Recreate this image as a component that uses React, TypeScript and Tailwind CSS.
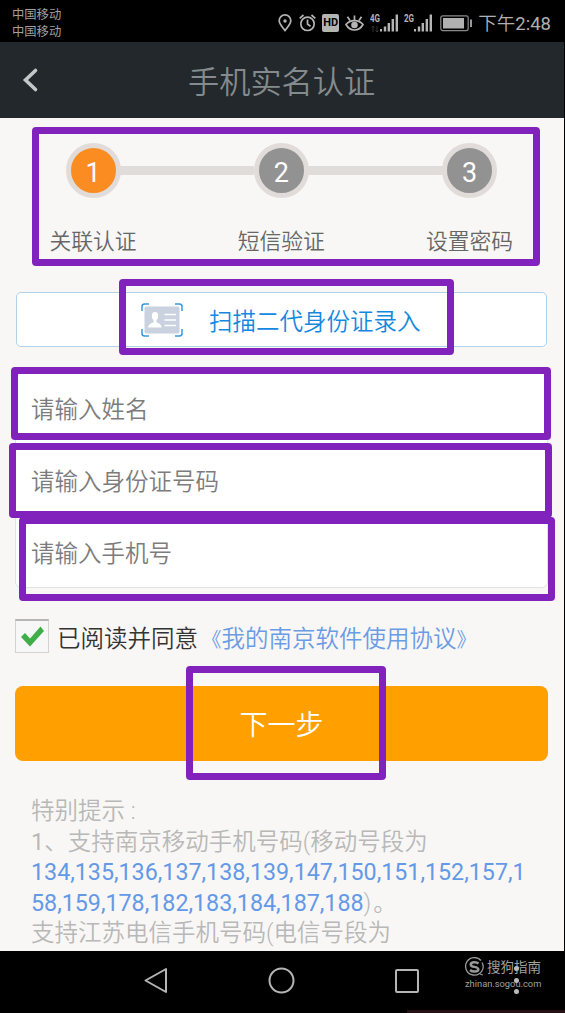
import React from "react";

const NOTE_NUMBERS_A = "134,135,136,137,138,139,147,150,151,152,157,1";
const NOTE_NUMBERS_B = "58,159,178,182,183,184,187,188";

function Frame({ className }: { className: string }) {
  return (
    <div
      className={`pointer-events-none absolute rounded-[4px] border-[7px] border-[#8022bb] ${className}`}
    />
  );
}

function Signal({ label, data }: { label: string; data?: boolean }) {
  return (
    <svg width="29" height="20" viewBox="0 0 29 20" fill="#b4b4b4">
      <text x="0" y="9" fontSize="10" fontWeight="700" textLength="10" lengthAdjust="spacingAndGlyphs">
        {label}
      </text>
      {data && (
        <path d="M3 13v6M1.500 14.500L3 13l1.500 1.500M7 13v6M5.500 17.500L7 19l1.500-1.500" fill="none" stroke="#333" strokeWidth="1" />
      )}
      <rect x="10" y="16" width="2" height="2.500" />
      <rect x="13.800" y="13.500" width="2.400" height="5" />
      <rect x="17.600" y="10" width="2.400" height="8.500" />
      <rect x="21.600" y="6" width="2.400" height="12.500" />
      <rect x="25.600" y="1.500" width="2.400" height="17" />
    </svg>
  );
}

function StatusBar() {
  return (
    <div className="flex h-[42px] items-start justify-between bg-black pl-3 pr-[13px] text-[#b0b0b0]">
      <div className="pt-[7px] text-[12.3px] leading-[17px] text-[#a0a0a0]">
        <div>中国移动</div>
        <div>中国移动</div>
      </div>
      <div className="flex h-[42px] items-center pt-[4px]">
        <svg width="14" height="18" viewBox="0 0 14 18" fill="none" stroke="#b4b4b4" strokeWidth="1.700">
          <path d="M7 16.500C4.500 13 1.200 10 1.200 6.700a5.800 5.800 0 0 1 11.600 0C12.800 10 9.500 13 7 16.500Z" />
          <circle cx="7" cy="7" r="1.700" fill="#b4b4b4" stroke="none" />
        </svg>
        <svg className="ml-[7px]" width="17" height="18" viewBox="0 0 17 18" fill="none" stroke="#b4b4b4" strokeWidth="1.700">
          <circle cx="8.500" cy="9.800" r="6.700" />
          <path d="M8.500 5.500v4.500l3 2.400M.7 4.300L4.500 1M16.300 4.300L12.500 1" />
        </svg>
        <div className="ml-[6px] flex h-[18px] w-[17px] items-center justify-center rounded-[2px] bg-[#b4b4b4] font-[Roboto] text-[11px] font-bold text-black">
          HD
        </div>
        <svg className="ml-[6px]" width="19" height="18" viewBox="0 0 19 18" fill="none" stroke="#b4b4b4" strokeWidth="1.700">
          <path d="M1 10.500C5 5.300 14 5.300 18 10.500C14 17.800 5 17.800 1 10.500Z" />
          <circle cx="9.500" cy="11" r="3.300" fill="#b4b4b4" stroke="none" />
          <path d="M9.500 6V1.500M5 6.500L2.500 2.800M14 6.500L16.500 2.800" />
        </svg>
        <div className="ml-[6px] flex">
          <Signal label="4G" data />
        </div>
        <div className="ml-[5px] flex">
          <Signal label="2G" />
        </div>
        <svg className="ml-[7px]" width="33" height="17" viewBox="0 0 33 17">
          <rect x=".8" y=".8" width="27.400" height="14.800" rx="2" fill="none" stroke="#8a8a8a" strokeWidth="1.200" />
          <rect x="3" y="3" width="21" height="10.500" fill="#b0b0b0" />
          <rect x="30" y="4.500" width="2" height="7.500" fill="#999" />
        </svg>
        <div className="ml-[5px] whitespace-nowrap pt-px text-[18.5px] font-[350] leading-5">
          下午<span className="font-normal">2:48</span>
        </div>
      </div>
    </div>
  );
}

function Header() {
  return (
    <div className="flex h-[76px] items-center bg-[#22282b]">
      <svg className="ml-[22px]" width="18" height="26" viewBox="0 0 18 26" fill="none" stroke="#c3c8c9" strokeWidth="3.600" strokeLinecap="round">
        <path d="M13.500 3.500L3.500 13l10 9.500" />
      </svg>
      <h1 className="ml-[148px] pt-[5px] text-[31.2px] font-[350] leading-10 text-[#858a8c]">手机实名认证</h1>
    </div>
  );
}

function Step({ n, label, active }: { n: number; label: string; active?: boolean }) {
  return (
    <div className="flex w-[88px] flex-col items-center">
      <div
        className={`flex size-[55px] items-center justify-center rounded-full border-[5px] border-[#e1dcd9] pt-[5px] text-[27px] leading-none text-white ${
          active ? "bg-[#fa8c21]" : "bg-[#929292]"
        }`}
      >
        {n}
      </div>
      <div className="mt-[32px] whitespace-nowrap text-[21.8px] font-[350] leading-6 text-[#666]">{label}</div>
    </div>
  );
}

function Connector() {
  return <div className="-mx-[17px] mt-[23px] h-[9px] flex-1 bg-[#e0dcd9]" />;
}

function ScanIcon() {
  return (
    <svg width="42" height="34" viewBox="0 0 42 34" fill="none">
      <rect x="3.500" y="3.500" width="35" height="27" rx="2" fill="#c9d2de" />
      <path d="M1 8V3.500Q1 1 3.500 1H8M34 1h4.500Q41 1 41 3.500V8M1 26v4.500Q1 33 3.500 33H8M34 33h4.500Q41 33 41 30.500V26" stroke="#3b96dc" strokeWidth="1.500" />
      <path d="M7 24.500q0-3 4-4.500l1.500-.8v-2q-2-2-1.700-5Q11.200 9 14 9t3.200 3.200q.3 3-1.700 5v2L17 20q3.500 1.500 3.500 4.500Z" fill="#fff" />
      <path d="M23.500 11.500H35M23.500 17H35M23.500 22.500H35" stroke="#fff" strokeWidth="1.700" />
    </svg>
  );
}

function Content() {
  return (
    <main className="h-[833px] overflow-hidden bg-[#f8f7f5]">
      <div className="flex items-start pl-[49px] pr-[50.5px] pt-[25px]">
        <Step n={1} label="关联认证" active />
        <Connector />
        <Step n={2} label="短信验证" />
        <Connector />
        <Step n={3} label="设置密码" />
      </div>

      <button className="ml-4 mt-[38px] flex h-[55px] w-[531px] items-center rounded-[5px] border border-[#b0d3e9] bg-white pl-[124px] text-[23.5px] font-[350] leading-8 text-[#1488df]">
        <ScanIcon />
        <span className="ml-[26px] pt-[4px]">扫描二代身份证录入</span>
      </button>

      <div className="ml-[15px] mt-[26px] w-[533px] divide-y divide-[#e2e2e2] rounded-[6px] border border-[#e2e2e2] bg-white text-[23.5px] font-[350] leading-8 text-[#7c7c7c]">
        <div className="flex h-[72px] items-center pl-[15px]">请输入姓名</div>
        <div className="flex h-[72px] items-center pl-[15px]">请输入身份证号码</div>
        <div className="flex h-[69px] items-center pl-[15px] pt-[3px]">请输入手机号</div>
      </div>

      <div className="ml-[15px] mt-[31px] flex items-center">
        <div className="flex size-[34px] items-center justify-center border border-t-2 border-[#d2d2d2] border-t-[#b5b5b5] bg-[#f7f7f7]">
          <svg width="25" height="24" viewBox="0 0 25 24" fill="#3fae49">
            <path d="M1 12l4-4 5 5.500L20.500 1.500l3.500 4.500L10 21.500Z" />
          </svg>
        </div>
        <div className="ml-[8px] flex h-[26px] whitespace-nowrap text-[23.5px] font-[350] leading-8 text-[#333]">
          已阅读并同意
          <span className="text-[#6b9be4]">
            <span className="ml-[3.5px] text-[20px]">《</span>我的南京软件使用协议<span className="text-[20px]">》</span>
          </span>
        </div>
      </div>

      <button className="ml-[15px] mt-[33px] block h-[75px] w-[533px] rounded-[8px] bg-[#ffa000] pt-[5px] text-[28px] font-[350] leading-10 text-white">
        下一步
      </button>

      <div className="mt-[35px] whitespace-nowrap pl-[31px] text-[23.5px] font-[350] leading-[30.5px] text-[#b8b8b8]">
        <p>特别提示 :</p>
        <p>
          <span className="font-normal">1</span>、支持南京移动手机号码(移动号段为
        </p>
        <p className="text-[23.25px] font-normal text-[#6499e7]">{NOTE_NUMBERS_A}</p>
        <p>
          <span className="text-[23.25px] font-normal text-[#6499e7]">{NOTE_NUMBERS_B}</span>
          )<span className="ml-[2px]">。</span>
        </p>
        <p>支持江苏电信手机号码(电信号段为</p>
      </div>
    </main>
  );
}

function NavBar() {
  return (
    <nav className="flex h-[62px] items-start bg-black pt-[15px]">
      <svg className="ml-[143px]" width="26" height="30" viewBox="0 0 26 30" fill="none" stroke="#b5b5b5" strokeWidth="2" strokeLinejoin="round">
        <path d="M23 3v23L2.500 14.500Z" />
      </svg>
      <svg className="ml-[98px]" width="30" height="30" viewBox="0 0 30 30" fill="none" stroke="#b5b5b5" strokeWidth="2">
        <circle cx="14.500" cy="14.500" r="12" />
      </svg>
      <svg className="ml-[97px]" width="26" height="30" viewBox="0 0 26 30" fill="none" stroke="#b5b5b5" strokeWidth="2">
        <rect x="2" y="4" width="22" height="22" rx="1" />
      </svg>
    </nav>
  );
}

function Watermark() {
  return (
    <div className="absolute left-[465px] top-[957px] text-[#a0a0a0]">
      <div className="flex items-center gap-[3px]">
        <svg width="19" height="20" viewBox="0 0 19 20" fill="none" stroke="#999">
          <path d="M16 3.500A8.800 8.800 0 1 0 18.200 10A8.800 8.800 0 0 0 17 5.500M15 17l3 1" strokeWidth="1.300" />
          <path d="M13.500 6.500C11 4.500 5.500 5 5.800 7.800C6 10.500 13.300 9.200 13.300 12.300C13.300 15.200 7.500 15.200 5 13" strokeWidth="2.500" />
        </svg>
        <span className="text-[13.5px] leading-5">搜狗指南</span>
      </div>
      <div className="pt-px font-[Roboto] text-[9.3px] leading-3">zhinan.sogou.com</div>
    </div>
  );
}

export default function App() {
  return (
    <div className="relative h-[1013px] w-[565px] overflow-hidden bg-black font-[Roboto,'Noto_Sans_CJK_SC',sans-serif]">
      <div className="w-[564px]">
        <StatusBar />
        <Header />
        <Content />
        <NavBar />
      </div>

      <Frame className="left-[32px] top-[127px] h-[139px] w-[508px]" />
      <Frame className="left-[119px] top-[279px] h-[76px] w-[335px]" />
      <Frame className="left-[11px] top-[367px] h-[73px] w-[540px]" />
      <Frame className="left-[9px] top-[443px] h-[75px] w-[543px]" />
      <Frame className="left-[19px] top-[517px] h-[84px] w-[536px]" />
      <Frame className="left-[186px] top-[666px] h-[114px] w-[200px]" />

      <Watermark />
      <div className="absolute left-[514px] top-[966px] flex flex-col gap-[6.500px]">
        <div className="size-[5px] rounded-full bg-[#bcbcbc]" />
        <div className="size-[5px] rounded-full bg-[#bcbcbc]" />
        <div className="size-[5px] rounded-full bg-[#bcbcbc]" />
      </div>
      <div className="absolute bottom-0 right-0 h-[3px] w-[158px] bg-[#241014]" />
    </div>
  );
}
